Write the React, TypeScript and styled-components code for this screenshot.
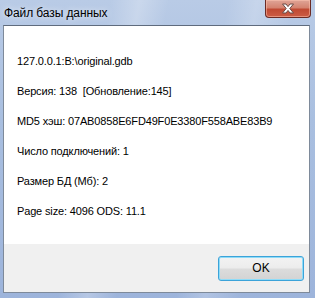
import styled, { createGlobalStyle } from 'styled-components';

const GlobalStyle = createGlobalStyle`
  html, body {
    margin: 0;
    padding: 0;
    background: #ffffff;
  }
  body {
    font-family: 'Liberation Sans', Arial, sans-serif;
  }
`;

const infoLines = [
  '127.0.0.1:B:\\original.gdb',
  'Версия: 138  [Обновление:145]',
  'MD5 хэш: 07AB0858E6FD49F0E3380F558ABE83B9',
  'Число подключений: 1',
  'Размер БД (Мб): 2',
  'Page size: 4096 ODS: 11.1',
];

export default function App() {
  return (
    <>
      <GlobalStyle />
      <Window>
        <TitleBar>
          <Title>Файл базы данных</Title>
          <CloseButton aria-label='close'>
            <svg width='14' height='11' viewBox='0 0 14 11'>
              <path
                d='M1.5 1 L5 1 L7 3.6 L9 1 L12.5 1 L8.8 5.5 L12.5 10 L9 10 L7 7.4 L5 10 L1.5 10 L5.2 5.5 Z'
                fill='#ffffff'
                stroke='#6b4a45'
                strokeWidth='1'
                strokeLinejoin='round'
              />
            </svg>
          </CloseButton>
        </TitleBar>
        <Client>
          <Content>
            {infoLines.map((line, index) => (
              <InfoLine key={index}>{line}</InfoLine>
            ))}
          </Content>
          <Footer>
            <OkButton>OK</OkButton>
          </Footer>
        </Client>
      </Window>
    </>
  );
}

const Window = styled.div`
  width: 315px;
  height: 298px;
  box-sizing: border-box;
  display: flex;
  flex-direction: column;
  padding: 0 5px 5px 3px;
  background:
    linear-gradient(100deg, rgba(255, 255, 255, 0) 30%, rgba(255, 255, 255, 0.25) 38%, rgba(255, 255, 255, 0) 46%),
    linear-gradient(100deg, rgba(255, 255, 255, 0) 62%, rgba(255, 255, 255, 0.2) 70%, rgba(255, 255, 255, 0) 80%),
    linear-gradient(180deg, #b9cbe6 0%, #a9bfe0 40%, #9db4db 100%);
`;

const TitleBar = styled.div`
  height: 25px;
  display: flex;
  align-items: flex-start;
  justify-content: space-between;
  flex-shrink: 0;
`;

const Title = styled.div`
  font-family: 'Liberation Sans', Arial, sans-serif;
  font-size: 12px;
  letter-spacing: -0.1px;
  color: #000000;
  padding: 6px 0 0 1px;
  text-shadow: 0 0 6px rgba(255, 255, 255, 0.9);
`;

const CloseButton = styled.div`
  width: 46px;
  height: 18px;
  margin-right: -1px;
  box-sizing: border-box;
  display: flex;
  align-items: center;
  justify-content: center;
  border: 1px solid #6b2b25;
  border-top: none;
  border-radius: 0 0 4px 4px;
  background: linear-gradient(180deg, #dfa597 0%, #d48370 45%, #c04a33 55%, #cc5d45 100%);
  box-shadow: inset 0 0 0 1px rgba(255, 200, 180, 0.5);
`;

const Client = styled.div`
  flex: 1;
  display: flex;
  flex-direction: column;
  border: 1px solid #7e8a9a;
  border-top-color: #5f6b7d;
  background: #f0f0f0;
`;

const Content = styled.div`
  flex: 1;
  background: #ffffff;
  display: flex;
  flex-direction: column;
  gap: 15px;
  padding: 28px 0 0 13px;
`;

const InfoLine = styled.div`
  font-family: 'Liberation Sans', Arial, sans-serif;
  font-size: 11px;
  letter-spacing: -0.15px;
  line-height: 15px;
  color: #000000;
  white-space: pre;
`;

const Footer = styled.div`
  height: 48px;
  flex-shrink: 0;
  display: flex;
  align-items: center;
  justify-content: flex-end;
  padding-right: 5px;
  box-sizing: border-box;
`;

const OkButton = styled.button`
  width: 86px;
  height: 25px;
  box-sizing: border-box;
  border: 1px solid #3ca3d9;
  border-radius: 3px;
  background: linear-gradient(180deg, #f3f3f3 0%, #ececec 48%, #dcdcdc 52%, #d3d3d3 100%);
  box-shadow: inset 0 0 0 1px #8fdcf8;
  font-family: 'Liberation Sans', Arial, sans-serif;
  font-size: 12px;
  color: #000000;
  padding: 0;
`;
